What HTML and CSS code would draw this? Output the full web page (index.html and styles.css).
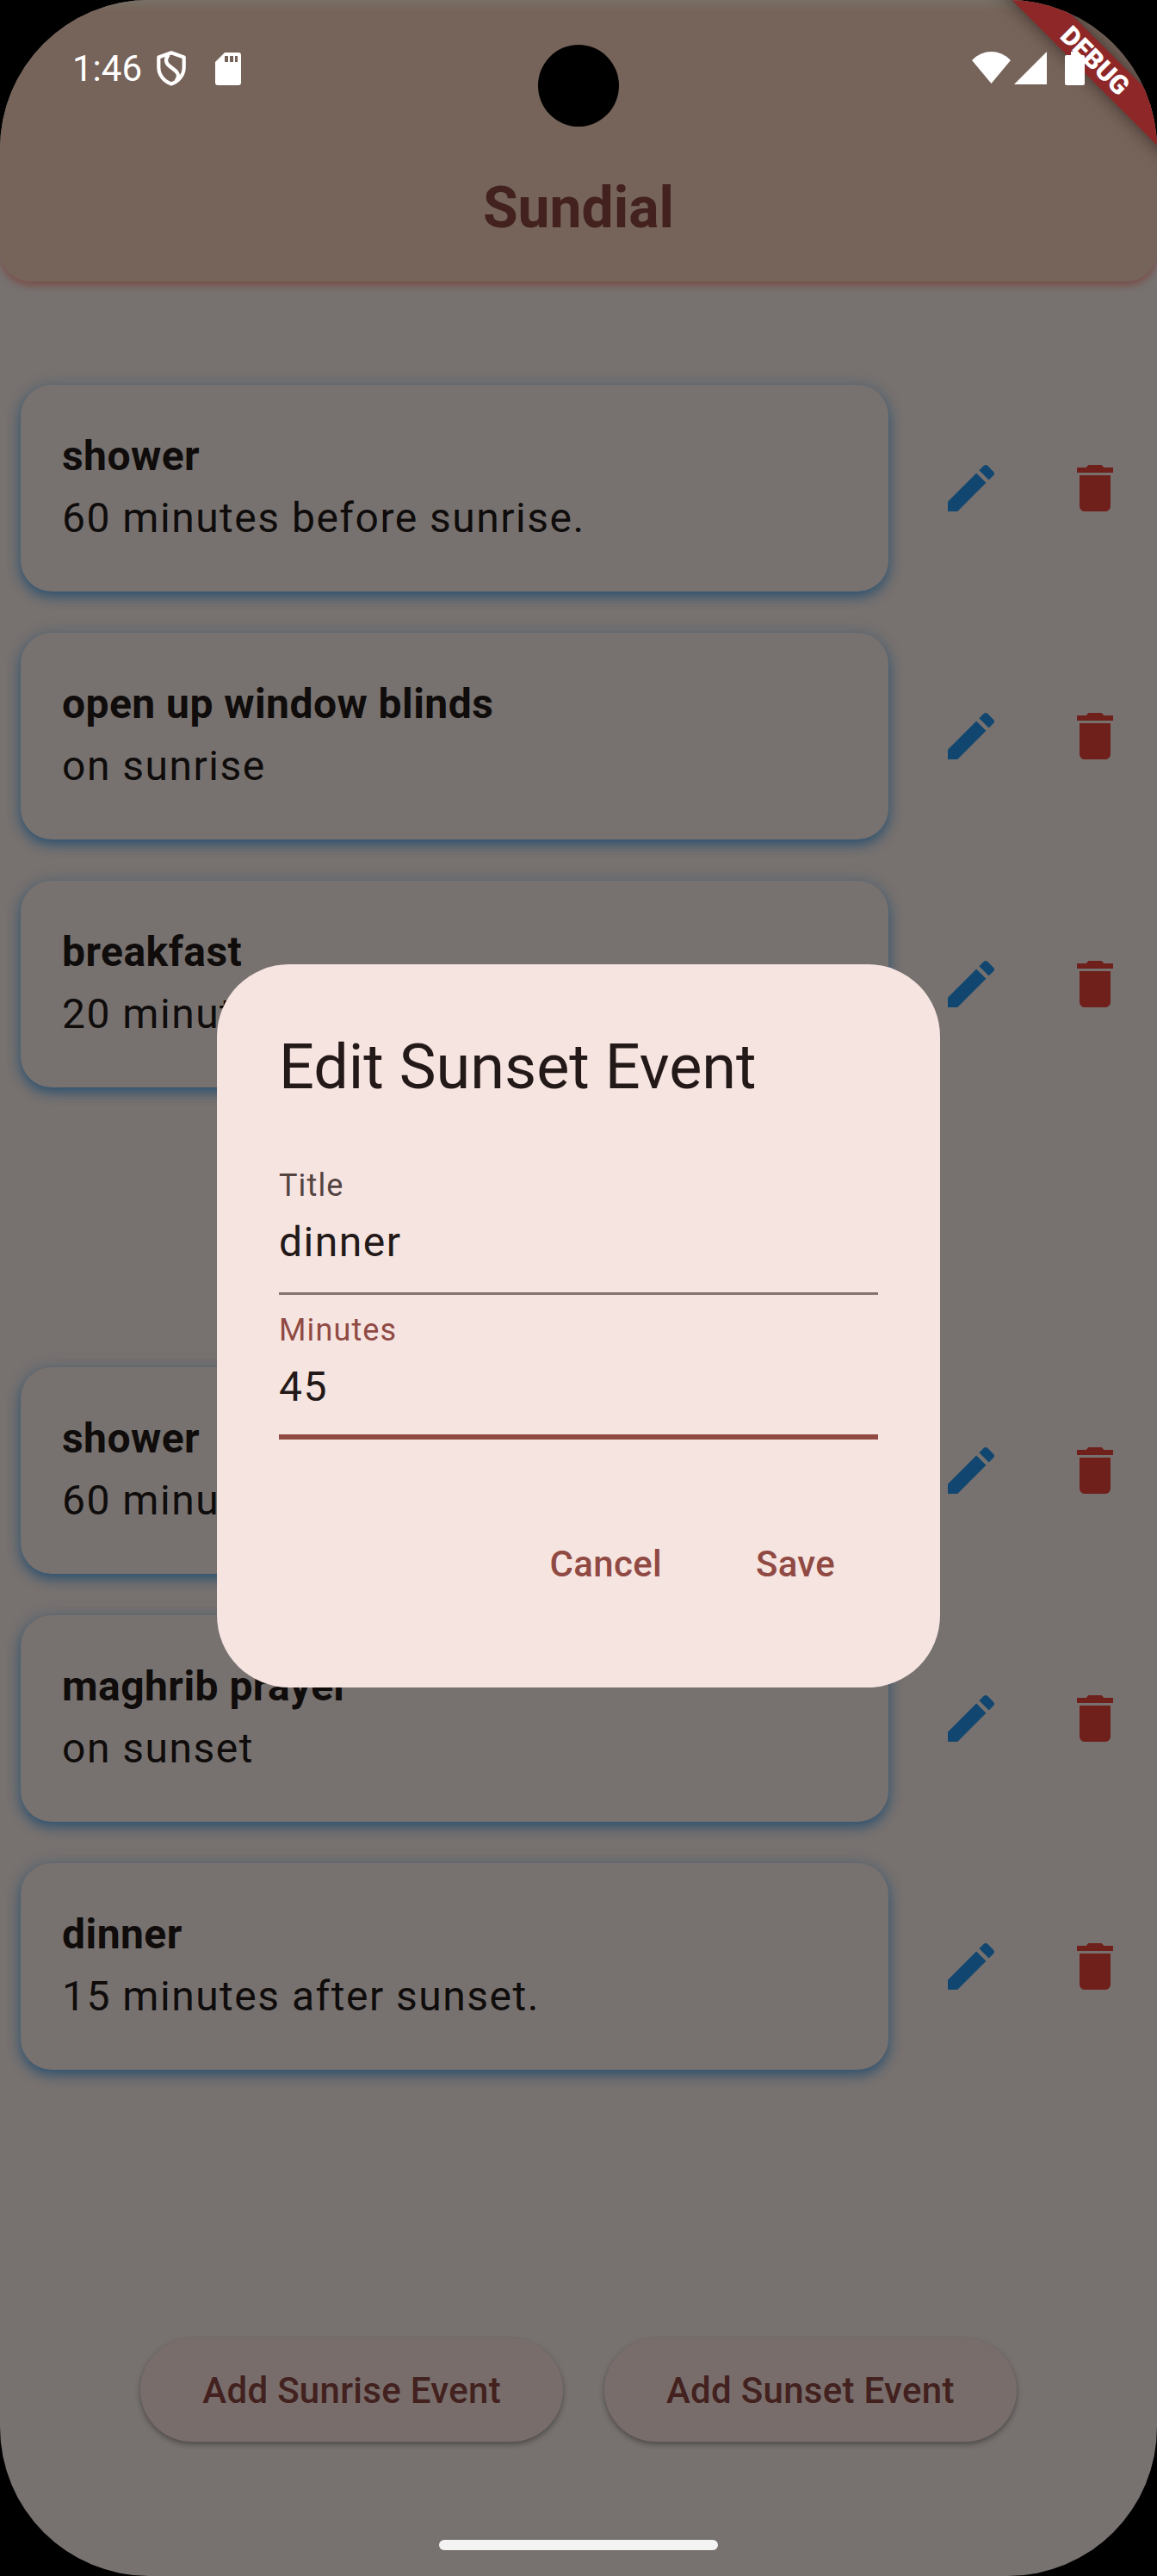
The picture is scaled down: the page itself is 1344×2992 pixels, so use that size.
FILE: index.html
```html
<!DOCTYPE html>
<html lang="en">
<head>
<meta charset="utf-8">
<title>Sundial</title>
<link rel="stylesheet" href="styles.css">
</head>
<body>
<svg width="0" height="0" class="defs" aria-hidden="true">
  <symbol id="edit" viewBox="0 0 24 24"><path d="M3 17.25V21h3.75L17.81 9.94l-3.75-3.75L3 17.25zM20.71 7.04c.39-.39.39-1.02 0-1.41l-2.34-2.34c-.39-.39-1.02-.39-1.41 0l-1.83 1.83 3.75 3.75 1.83-1.83z"/></symbol>
  <symbol id="trash" viewBox="0 0 24 24"><path d="M6 19c0 1.1.9 2 2 2h8c1.1 0 2-.9 2-2V7H6v12zM19 4h-3.5l-1-1h-5l-1 1H5v2h14V4z"/></symbol>
</svg>
<div class="screen">
  <header class="app-bar">
    <div class="status-bar">
      <span class="clock">1:46</span>
      <svg class="shield" viewBox="0 0 34 41"><g fill="none" stroke="#fff" stroke-width="4.2" stroke-linejoin="round"><path d="M17 2.3 31.700 7.600V19c0 9-6 16.500-14.700 19.500C8.300 35.500 2.300 28 2.300 19V7.600z"/><path d="M14 4.500c-4 4-4 9 0 12.500l7 5.500c5 4 5 8.500 1.500 12.500"/></g></svg>
      <svg class="sd" viewBox="0 0 30 38"><path fill="#fff" fill-rule="evenodd" d="M11 0H27a3 3 0 0 1 3 3V35a3 3 0 0 1-3 3H3a3 3 0 0 1-3-3V11zM11 4v7h4V4zM17 4v7h4V4zM23 4v7h3V4z"/></svg>
    </div>
    <h1 class="app-title">Sundial</h1>
  </header>

  <main class="events">
    <section class="group">
      <div class="event"><div class="card"><b>shower</b><span>60 minutes before sunrise.</span></div><svg class="icon edit"><use href="#edit"/></svg><svg class="icon trash"><use href="#trash"/></svg></div>
      <div class="event"><div class="card"><b>open up window blinds</b><span>on sunrise</span></div><svg class="icon edit"><use href="#edit"/></svg><svg class="icon trash"><use href="#trash"/></svg></div>
      <div class="event"><div class="card"><b>breakfast</b><span>20 minutes after sunrise.</span></div><svg class="icon edit"><use href="#edit"/></svg><svg class="icon trash"><use href="#trash"/></svg></div>
    </section>
    <section class="group">
      <div class="event"><div class="card"><b>shower</b><span>60 minutes before sunset.</span></div><svg class="icon edit"><use href="#edit"/></svg><svg class="icon trash"><use href="#trash"/></svg></div>
      <div class="event"><div class="card"><b>maghrib prayer</b><span>on sunset</span></div><svg class="icon edit"><use href="#edit"/></svg><svg class="icon trash"><use href="#trash"/></svg></div>
      <div class="event"><div class="card"><b>dinner</b><span>15 minutes after sunset.</span></div><svg class="icon edit"><use href="#edit"/></svg><svg class="icon trash"><use href="#trash"/></svg></div>
    </section>
  </main>

  <footer class="actions">
    <button class="pill">Add Sunrise Event</button>
    <button class="pill">Add Sunset Event</button>
  </footer>
  <div class="home-bar"></div>

  <div class="overlay">
    <div class="dialog">
      <h2>Edit Sunset Event</h2>
      <div class="field"><label>Title</label><div class="value">dinner</div></div>
      <div class="field focused"><label>Minutes</label><div class="value">45</div></div>
      <div class="buttons"><span>Cancel</span><span>Save</span></div>
    </div>
  </div>

  <div class="debug">DEBUG</div>
  <div class="camera"></div>
  <div class="system-icons">
    <svg width="45" height="38" viewBox="0 0 45 38"><path fill="#fff" d="M0 10C13-3.300 32-3.300 45 10L22.500 37z"/></svg>
    <svg width="38" height="38" viewBox="0 0 38 38"><path fill="#fff" d="M38 0V38H0z"/></svg>
    <svg class="battery" width="23" height="39" viewBox="0 0 23 39"><path fill="#fff" d="M7 0h9v4h5a2 2 0 0 1 2 2v31a2 2 0 0 1-2 2H2a2 2 0 0 1-2-2V6a2 2 0 0 1 2-2h5z"/></svg>
  </div>
</div>
</body>
</html>
```
FILE: styles.css
```css
* { box-sizing: border-box; margin: 0; }

html, body { background: #000; }

body { font-family: Roboto, sans-serif; color: #0f0c0b; }

.defs { position: absolute; }

.screen {
  position: relative;
  display: flex;
  flex-direction: column;
  width: 1344px;
  height: 2992px;
  overflow: hidden;
  border-radius: 173px;
  background: #777270;
}

/* App bar */
.app-bar {
  height: 327px;
  border-radius: 0 0 36px 36px;
  background: linear-gradient(#787066, #776a5f 6px, #766359 13px);
  box-shadow: inset 0 3px 5px -2px #787066, 0 5px 8px #7a4f4a;
}

.status-bar {
  display: flex;
  height: 156px;
  padding: 59px 0 0 84px;
  color: #fff;
}

.clock { width: 98px; font-size: 42px; line-height: 42px; }
.shield { width: 34px; height: 41px; }
.sd { width: 30px; height: 38px; margin: 2px 0 0 34px; }

.app-title {
  font-size: 66px;
  font-weight: 700;
  line-height: 84px;
  padding-top: 44px;
  text-align: center;
  color: #42211e;
}

/* Event list */
.events {
  display: flex;
  flex-direction: column;
  gap: 325px;
  padding-top: 120px;
}

.group { display: flex; flex-direction: column; gap: 48px; }

.event { display: flex; align-items: center; height: 240px; padding-left: 24px; }

.card {
  display: flex;
  flex-direction: column;
  width: 1008px;
  height: 240px;
  padding: 47px 48px;
  border-radius: 36px;
  background: #777270;
  box-shadow: 0 6px 14px rgba(15, 69, 112, .66), 0 0 20px rgba(15, 69, 112, .14);
  font-size: 48px;
  line-height: 72px;
  letter-spacing: 1.5px;
}

.card b { font-weight: 700; letter-spacing: .45px; }

.icon { width: 72px; height: 72px; }
.icon.edit { margin-left: 60px; fill: #10466f; }
.icon.trash { margin-left: 72px; fill: #70201a; }

/* Bottom buttons */
.actions {
  display: flex;
  justify-content: center;
  gap: 48px;
  padding-top: 312px;
}

.pill {
  height: 120px;
  padding: 2px 72px 0;
  border: 0;
  border-radius: 60px;
  background: #786d6b;
  box-shadow: 0 3px 6px rgba(0, 0, 0, .35);
  font: 500 42px/60px Roboto, sans-serif;
  letter-spacing: .3px;
  color: #42211e;
}

.home-bar {
  width: 324px;
  height: 12px;
  margin: 114px auto 0;
  border-radius: 6px;
  background: #f3f3f3;
}

/* Dialog */
.overlay {
  position: absolute;
  inset: 0;
  display: flex;
  justify-content: center;
  padding-top: 1120px;
}

.dialog {
  width: 840px;
  height: 840px;
  padding: 72px;
  border-radius: 84px;
  background: #f6e4e1;
  color: #231918;
}

.dialog h2 { font-size: 72px; font-weight: 400; line-height: 96px; }

.field {
  height: 168px;
  border-bottom: 3px solid #857371;
}

.dialog h2 + .field { margin-top: 48px; }

.field label {
  display: block;
  padding: 17px 0 6px;
  font-size: 36px;
  line-height: 48px;
  letter-spacing: 1.125px;
  color: #534341;
}

.value { font-size: 48px; line-height: 72px; letter-spacing: 1.5px; }

.focused { border-bottom: 6px solid #904a43; }
.focused label { color: #904a43; }

.buttons {
  display: flex;
  justify-content: flex-end;
  gap: 109px;
  padding: 115px 50px 0 0;
  font-size: 42px;
  font-weight: 500;
  line-height: 60px;
  letter-spacing: .3px;
  color: #904a43;
}

/* Corner banner */
.debug {
  position: absolute;
  left: 1112px;
  top: 52px;
  width: 320px;
  height: 37px;
  transform: rotate(45deg);
  background: #8e2828;
  box-shadow: 0 0 20px rgba(0, 0, 0, .5);
  font-size: 30.6px;
  font-weight: 900;
  line-height: 37px;
  text-align: center;
  color: #fff;
}

.camera {
  position: absolute;
  left: 625px;
  top: 52px;
  width: 94px;
  height: 95px;
  border-radius: 50%;
  background: #000;
}

.system-icons {
  position: absolute;
  left: 1129px;
  top: 60px;
  display: flex;
  gap: 4px;
}

.battery { margin-left: 17px; }
```
